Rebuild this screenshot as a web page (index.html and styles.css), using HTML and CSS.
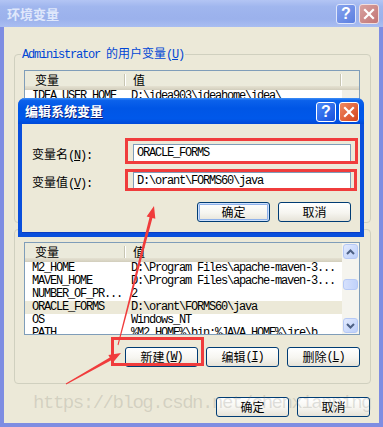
FILE: index.html
```html
<!DOCTYPE html>
<html lang="zh-CN">
<head>
    <meta charset="UTF-8">
    <title>环境变量</title>
    <link rel="stylesheet" href="styles.css">
</head>
<body>
    <div class="window">
        <div class="titlebar">
            <span class="title">环境变量</span>
            <div class="caps">
                <span class="cap help">?</span>
                <span class="cap close"><svg width="12" height="12" viewBox="0 0 12 12"><path d="M2 2L10 10M10 2L2 10" stroke="#fff" stroke-width="2.2" stroke-linecap="square"/></svg></span>
            </div>
        </div>

        <div class="client">
            <fieldset class="group user">
                <legend><span class="en">Administrator </span>的用户变量<span class="en">(<u>U</u>)</span></legend>
                <div class="lv upper">
                    <div class="lv-head">
                        <div class="hc c1">变量</div>
                        <div class="hc c2 wide">值</div>
                    </div>
                    <div class="lv-rows-wrap">
                        <div class="lv-rows en">
                            <div class="row"><span class="c1">IDEA_USER_HOME</span><span class="c2">D:\idea903\ideahome\idea\</span></div>
                            <div class="row"><span class="c1">JAVA_HOME</span><span class="c2">C:\Program Files\Java\jdk1.8</span></div>
                            <div class="row"><span class="c1">TEMP</span><span class="c2">%USERPROFILE%\Local Settings\Temp</span></div>
                            <div class="row"><span class="c1">TMP</span><span class="c2">%USERPROFILE%\Local Settings\Temp</span></div>
                        </div>
                        <div class="sb-track"></div>
                    </div>
                </div>
                <div class="btn-row">
                    <span class="btn">新建<span class="en">(<u>N</u>)</span></span>
                    <span class="btn">编辑<span class="en">(<u>E</u>)</span></span>
                    <span class="btn">删除<span class="en">(<u>D</u>)</span></span>
                </div>
            </fieldset>

            <fieldset class="group sys">
                <legend>系统变量<span class="en">(<u>S</u>)</span></legend>
                <div class="lv lower">
                    <div class="lv-main">
                        <div class="lv-head">
                            <div class="hc c1">变量</div>
                            <div class="hc c2">值</div>
                        </div>
                        <div class="lv-rows en">
                            <div class="row"><span class="c1">M2_HOME</span><span class="c2">D:\Program Files\apache-maven-3...</span></div>
                            <div class="row"><span class="c1">MAVEN_HOME</span><span class="c2">D:\Program Files\apache-maven-3...</span></div>
                            <div class="row"><span class="c1">NUMBER_OF_PR...</span><span class="c2">2</span></div>
                            <div class="row selected"><span class="c1">ORACLE_FORMS</span><span class="c2">D:\orant\FORMS60\java</span></div>
                            <div class="row"><span class="c1">OS</span><span class="c2">Windows_NT</span></div>
                            <div class="row"><span class="c1">PATH</span><span class="c2">%M2_HOME%\bin;%JAVA_HOME%\jre\b...</span></div>
                        </div>
                    </div>
                    <div class="sb">
                        <div class="sb-btn"><div class="sb-face"><svg width="9" height="6" viewBox="0 0 9 6"><path d="M1 5L4.5 1.5L8 5" fill="none" stroke="#4d6185" stroke-width="2"/></svg></div></div>
                        <div class="sb-gap"></div>
                        <div class="sb-thumb"></div>
                        <div class="sb-fill"></div>
                        <div class="sb-btn"><div class="sb-face"><svg width="9" height="6" viewBox="0 0 9 6"><path d="M1 1L4.5 4.5L8 1" fill="none" stroke="#4d6185" stroke-width="2"/></svg></div></div>
                    </div>
                </div>
                <div class="btn-row">
                    <span class="btn">新建<span class="en">(<u>W</u>)</span></span>
                    <span class="btn">编辑<span class="en">(<u>I</u>)</span></span>
                    <span class="btn">删除<span class="en">(<u>L</u>)</span></span>
                </div>
            </fieldset>

            <div class="btn-row bottom">
                <span class="btn">确定</span>
                <span class="btn">取消</span>
            </div>
        </div>

        <!-- edit dialog on top of the main window -->
        <div class="dialog">
            <div class="dlg-title">
                <span class="title">编辑系统变量</span>
                <div class="caps">
                    <span class="cap help">?</span>
                    <span class="cap close"><svg width="12" height="12" viewBox="0 0 12 12"><path d="M2 2L10 10M10 2L2 10" stroke="#fff" stroke-width="2.2" stroke-linecap="square"/></svg></span>
                </div>
            </div>
            <div class="dlg-body">
                <div class="field">
                    <span class="lbl">变量名<span class="en">(<u>N</u>):</span></span>
                    <div class="input en">ORACLE_FORMS</div>
                </div>
                <div class="field">
                    <span class="lbl">变量值<span class="en">(<u>V</u>):</span></span>
                    <div class="input en">D:\orant\FORMS60\java</div>
                </div>
                <div class="btn-row dlg-btns">
                    <span class="btn default">确定</span>
                    <span class="btn">取消</span>
                </div>
            </div>
        </div>

        <!-- red annotations -->
        <svg class="annot" width="383" height="427" viewBox="0 0 383 427">
            <g fill="none" stroke="#f03c3c" stroke-width="3">
                <rect x="126.5" y="139.5" width="230" height="23"/>
                <rect x="126.5" y="170.5" width="229" height="19"/>
                <rect x="112.5" y="338.5" width="90" height="26"/>
            </g>
            <g fill="#f03c3c">
                <polygon points="117.52,344.87 149.54,217.24 146.63,216.49 154,206 155.35,218.75 152.44,218 118.48,345.13"/>
                <polygon points="65.75,383.56 109.81,357.58 108.34,354.97 121,353 112.76,362.81 111.29,360.2 66.25,384.44"/>
            </g>
        </svg>

        <div class="watermark">https://blog.csdn.net/chenxianping</div>
    </div>
</body>
</html>
```

FILE: styles.css
```css
body {
    margin: 0;
    background: #fff;
    font-family: "Noto Sans CJK SC", sans-serif;
    font-size: 12px;
    color: #000;
}

.en {
    font-family: "Liberation Mono", "Noto Sans CJK SC", monospace;
    letter-spacing: -1.2px;
}

u {
    text-decoration: underline;
}

.window {
    position: relative;
    width: 383px;
    height: 427px;
    overflow: hidden;
    background: #ece9d8;
}

/* inactive title bar */
.titlebar {
    display: flex;
    align-items: center;
    height: 27px;
    padding: 0 4px 0 7px;
    box-sizing: border-box;
    background: linear-gradient(#b3c5f4, #a0b6ee 25%, #9bb1ec 70%, #a9bdf1);
}

.title {
    flex: 1;
    font-weight: bold;
    font-size: 13px;
    line-height: 16px;
    color: #dfe7fb;
}

.caps {
    display: flex;
    gap: 3px;
}

.cap {
    width: 20px;
    height: 20px;
    box-sizing: border-box;
    border-radius: 3px;
    display: flex;
    align-items: center;
    justify-content: center;
    font-family: "Liberation Sans", sans-serif;
    font-weight: bold;
    font-size: 16px;
    line-height: 1;
    color: #fff;
}

.titlebar .help {
    border: 1px solid #dfe6fa;
    background: linear-gradient(135deg, #86a3ee, #5b7ee0);
}

.titlebar .close {
    border: 1px solid #f1dede;
    background: linear-gradient(135deg, #d8a2a0, #c27575);
}

/* window body */
.client {
    height: 400px;
    box-sizing: border-box;
    border: 4px solid #7e8de2;
    border-top: 0;
    display: flex;
    flex-direction: column;
}

.group {
    min-width: 0;
    border: 1px solid #d0d0bf;
    border-radius: 4px;
}

.group legend {
    margin-left: -3px;
    padding: 0 1px;
    color: #0046d5;
    line-height: 14px;
}

.group.user {
    margin: 19px 8px 0 10px;
    padding: 8px 10px 4px 9px;
}

.group.sys {
    margin: 0 8px 0 10px;
    padding: 7px 10px 16px 9px;
}

.group.sys legend {
    line-height: 10px;
}

/* list views */
.lv {
    box-sizing: border-box;
    border: 1px solid #7f9db9;
    background: #fff;
    overflow: hidden;
}

.lv.upper {
    height: 120px;
    display: flex;
    flex-direction: column;
}

.lv.lower {
    height: 93px;
    display: flex;
}

.lv-main {
    flex: 1;
    overflow: hidden;
}

.lv-head {
    display: flex;
    height: 19px;
    background: linear-gradient(#ebeadb 0, #ebeadb 15px, #e4e1d1 15px, #dcd8c7 17px, #d1cdbc 19px);
}

.hc {
    position: relative;
    box-sizing: border-box;
    line-height: 17px;
}

.hc.c1 {
    width: 100px;
    padding-left: 10px;
}

.hc.c2 {
    padding-left: 8px;
}

.hc.c2.wide {
    width: 216px;
}

.hc.c1::after,
.hc.wide::after {
    content: "";
    position: absolute;
    right: 0;
    top: 3px;
    bottom: 4px;
    width: 1px;
    background: #c7c5b2;
    box-shadow: 1px 0 #fff;
}

.lv-rows-wrap {
    flex: 1;
    display: flex;
    overflow: hidden;
}

.lv-rows-wrap .lv-rows {
    flex: 1;
}

.sb-track {
    width: 17px;
    background: #f1efe6;
}

.row {
    display: flex;
    height: 13px;
    line-height: 13px;
    white-space: nowrap;
}

.row .c1 {
    width: 100px;
    flex: none;
    box-sizing: border-box;
    padding-left: 7px;
    overflow: hidden;
}

.row .c2 {
    padding-left: 6px;
}

.row.selected {
    background: #ece9d8;
}

/* scrollbar */
.sb {
    width: 17px;
    flex: none;
    display: flex;
    flex-direction: column;
    background: #f5f4ee;
}

.sb-btn {
    height: 17px;
    padding: 1px;
    box-sizing: border-box;
}

.sb-face {
    height: 100%;
    box-sizing: border-box;
    border: 1px solid #b6c9f6;
    border-radius: 3px;
    background: linear-gradient(135deg, #e2eafe, #bccff9);
    display: flex;
    align-items: center;
    justify-content: center;
}

.sb-gap {
    height: 19px;
}

.sb-thumb {
    height: 11px;
    margin: 0 1px;
    box-sizing: border-box;
    border: 1px solid #b6c9f6;
    border-radius: 3px;
    background: linear-gradient(90deg, #d6e1fd, #c0d2fa);
}

.sb-fill {
    flex: 1;
}

/* buttons */
.btn-row {
    display: flex;
    justify-content: flex-end;
    gap: 8px;
}

.group .btn-row {
    margin-top: 8px;
}

.group.sys .btn-row {
    margin-top: 12px;
}

.btn-row.bottom {
    margin: 13px 9px 0 0;
}

.btn {
    width: 73px;
    height: 20px;
    box-sizing: border-box;
    border: 1px solid #003c74;
    border-radius: 3px;
    background: linear-gradient(#ffffff, #f6f5f0 55%, #e6e3d8);
    display: flex;
    align-items: center;
    justify-content: center;
    line-height: 16px;
}

.btn.default {
    box-shadow: inset 0 0 0 1px #cee0fc, inset 0 0 0 2px #8fb1ea;
}

/* edit dialog */
.dialog {
    position: absolute;
    left: 18px;
    top: 98px;
    width: 346px;
    height: 139px;
    box-sizing: border-box;
    border: 4px solid #0a4fdc;
    border-top: 0;
    border-radius: 7px 7px 0 0;
    background: #ece9d8;
    box-shadow: inset 0 -1px #0a3cc4;
}

.dlg-title {
    display: flex;
    align-items: center;
    height: 26px;
    padding: 0 1px 0 3px;
    margin: 0 -4px;
    padding-left: 7px;
    padding-right: 5px;
    border-radius: 7px 7px 0 0;
    background: linear-gradient(#3d8ef7 0, #0b61eb 10%, #0056e6 40%, #0058ea 80%, #0049d8);
}

.dlg-title .title {
    color: #fff;
    font-size: 13px;
    text-shadow: 1px 1px #0c1f7e;
}

.dlg-title .caps {
    margin-top: 1px;
}

.dlg-title .help {
    border: 1px solid #fff;
    background: linear-gradient(135deg, #4a89f8, #1650dd);
}

.dlg-title .close {
    border: 1px solid #fff;
    background: linear-gradient(135deg, #ef8a62, #d4431b);
}

.dlg-body {
    padding: 20px 9px 0 10px;
    display: flex;
    flex-direction: column;
    gap: 9px;
}

.field {
    display: flex;
    align-items: center;
    height: 19px;
}

.lbl {
    width: 101px;
    flex: none;
}

.input {
    width: 220px;
    height: 19px;
    box-sizing: border-box;
    border: 1px solid #7f9db9;
    background: #fff;
    padding-left: 3px;
    line-height: 17px;
    white-space: nowrap;
}

.dlg-btns {
    margin-top: 2px;
}

/* overlays */
.annot {
    position: absolute;
    left: 0;
    top: 0;
    pointer-events: none;
}

.watermark {
    position: absolute;
    left: 33px;
    top: 393px;
    font-family: "Liberation Mono", monospace;
    font-size: 19px;
    line-height: 20px;
    letter-spacing: -1.46px;
    color: rgba(120, 120, 110, 0.22);
    white-space: nowrap;
    pointer-events: none;
}
```
